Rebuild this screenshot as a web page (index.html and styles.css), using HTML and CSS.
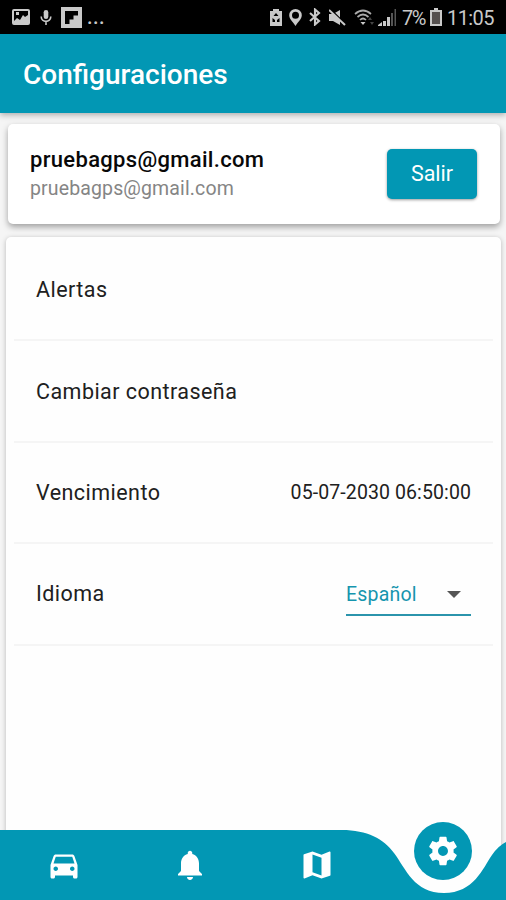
FILE: index.html
```html
<!DOCTYPE html>
<html lang="es">
<head>
<meta charset="utf-8">
<title>Configuraciones</title>
<link rel="stylesheet" href="styles.css">
</head>
<body>
<div class="app">
  <div class="status">
    <div class="status-left">
      <svg class="picture" width="18" height="16" viewBox="0 0 18 16"><path fill-rule="evenodd" d="M2 0h14a2 2 0 0 1 2 2v12a2 2 0 0 1-2 2H2a2 2 0 0 1-2-2V2a2 2 0 0 1 2-2zM2 2v10l3-3 3 2 3-5 2 2 3-2V2zM4 3h3v3H4z"/></svg>
      <svg class="mic" width="12" height="15" viewBox="0 0 12 15"><rect x="3.7" width="4.6" height="9" rx="2.3"/><path d="M1.2 6.500C1.200 13 10.800 13 10.800 6.500M6 11v4" fill="none" stroke="#c9c9c9" stroke-width="1.6"/></svg>
      <svg class="board" width="21" height="21" viewBox="0 0 21 21"><path fill-rule="evenodd" d="M0 0h21v21H0zM4 4v13h4.500v-4.500h4V8.500H17V4z"/></svg>
      <span class="more">...</span>
    </div>
    <div class="status-right">
      <svg width="12" height="17" viewBox="0 0 12 17"><path fill-rule="evenodd" d="M3 0h6v2h3v15H0V2h3zM6 4 3.500 7h5zM2.500 9v4H5v-2zm7 0L7 11v2h2.500z"/></svg>
      <svg class="pin" width="13" height="17" viewBox="0 0 13 17"><path fill-rule="evenodd" d="M6.500 0A6.300 6.300 0 0 0 .2 6.300C.2 10 4 13 6.500 17 9 13 12.800 10 12.800 6.300A6.300 6.300 0 0 0 6.500 0zm0 2.800a3.500 3.500 0 1 1 0 7 3.500 3.500 0 0 1 0-7z"/></svg>
      <svg class="bluetooth" width="12" height="18" viewBox="0 0 12 18"><path d="m1 5 9 8-4 3.500v-15L10 5l-9 8" fill="none" stroke="#c9c9c9" stroke-width="2.100"/></svg>
      <svg class="mute" width="17" height="17" viewBox="0 0 17 17"><path d="M0 5h4l7-4v15l-7-4H0z"/><path d="m1 0 16 16" stroke="#000" stroke-width="2"/><path d="m0 1 16 15" stroke="#c9c9c9" stroke-width="2"/></svg>
      <svg class="wifi" width="21" height="17" viewBox="0 0 21 17"><path d="M1 5Q9-2 17 5M3.500 8Q9 3 14.500 8M6 11q3-3 6 0" fill="none" stroke="#aaa" stroke-width="1.700"/><path d="m9 16-2.500-3h5z"/><path d="m16 8-2 3h4zm2 8-2-3h4z" fill="#444"/></svg>
      <svg class="signal" width="18" height="17" viewBox="0 0 18 17"><path d="M0 17v-1l4-3v4zm5-5h3v5H5zm4-4h3v9H9z"/><path d="M13 4h2v13h-2zM16.500 0H18v17h-1.500z" fill="#555"/></svg>
      <span class="percent">7%</span>
      <svg class="battery" width="12" height="18" viewBox="0 0 12 18"><path d="M4 0h4v2h4v16H0V2h4z"/><path d="M2 4h8v12H2z" fill="#55504f"/></svg>
      <span class="clock">11:05</span>
    </div>
  </div>
  <header class="bar"><h1>Configuraciones</h1></header>
  <main>
    <section class="account">
      <div><div class="name">pruebagps@gmail.com</div><div class="mail">pruebagps@gmail.com</div></div>
      <button class="logout">Salir</button>
    </section>
    <section class="settings">
      <div class="row"><span>Alertas</span></div>
      <div class="row"><span>Cambiar contraseña</span></div>
      <div class="row"><span>Vencimiento</span><span class="date">05-07-2030 06:50:00</span></div>
      <div class="row"><span>Idioma</span><div class="select"><span>Español</span><svg width="14" height="7" viewBox="0 0 14 7"><path d="M0 0h14L7 7z" fill="#555"/></svg></div></div>
    </section>
  </main>
  <nav>
    <svg class="wave" width="506" height="70" viewBox="0 0 506 70"><path d="M0 0H342C367 0 384 9 394 23C406 39 414 63 444 63C474 63 483 38 492 25Q498 16 506 12V70H0z" fill="#0297b4"/></svg>
    <div class="tabs">
      <svg width="36" height="36" viewBox="0 0 24 24"><path d="M18.920 6.010C18.720 5.420 18.160 5 17.500 5h-11c-.66 0-1.210.42-1.420 1.010L3 12v8c0 .55.45 1 1 1h1c.55 0 1-.45 1-1v-1h12v1c0 .55.45 1 1 1h1c.55 0 1-.45 1-1v-8l-2.080-5.990zM6.500 16c-.83 0-1.500-.67-1.500-1.500S5.670 13 6.500 13s1.500.67 1.500 1.500S7.330 16 6.500 16zm11 0c-.83 0-1.500-.67-1.500-1.500s.67-1.500 1.500-1.500 1.500.67 1.500 1.500-.67 1.500-1.500 1.500zM5 11l1.500-4.500h11L19 11H5z"/></svg>
      <svg width="36" height="36" viewBox="0 0 24 24"><path d="M12 22c1.100 0 2-.9 2-2h-4c0 1.100.89 2 2 2zm6-6v-5c0-3.070-1.640-5.640-4.500-6.320V4c0-.83-.67-1.500-1.500-1.500s-1.500.67-1.500 1.500v.68C7.630 5.360 6 7.920 6 11v5l-2 2v1h16v-1l-2-2z"/></svg>
      <svg width="36" height="36" viewBox="0 0 24 24"><path d="M20.500 3l-.16.030L15 5.100 9 3 3.360 4.900c-.21.070-.36.250-.36.480V20.500c0 .28.220.5.500.5l.16-.03L9 18.900l6 2.100 5.640-1.900c.21-.07.36-.25.36-.48V3.500c0-.28-.22-.5-.5-.5zM15 19l-6-2.110V5l6 2.110V19z"/></svg>
      <span class="active"><svg width="34" height="34" viewBox="0 0 24 24"><path d="M19.430 12.980c.04-.32.070-.64.070-.98s-.03-.66-.07-.98l2.110-1.650c.19-.15.240-.42.120-.64l-2-3.460c-.12-.22-.39-.3-.61-.22l-2.490 1c-.52-.4-1.080-.73-1.690-.98l-.38-2.650C14.460 2.180 14.250 2 14 2h-4c-.25 0-.46.18-.49.42l-.38 2.650c-.61.25-1.170.59-1.690.98l-2.490-1c-.23-.09-.49 0-.61.220l-2 3.460c-.13.220-.07.490.120.640l2.110 1.650c-.04.320-.07.650-.07.980s.03.660.07.980l-2.110 1.650c-.19.150-.24.420-.12.640l2 3.460c.12.220.39.300.61.220l2.490-1c.52.400 1.080.73 1.690.98l.38 2.650c.03.240.24.420.49.420h4c.25 0 .46-.18.490-.42l.38-2.650c.61-.25 1.170-.59 1.690-.98l2.490 1c.23.090.49 0 .61-.22l2-3.460c.12-.22.070-.49-.12-.64l-2.110-1.650zM12 15.500c-1.930 0-3.500-1.570-3.500-3.500s1.570-3.500 3.500-3.500 3.500 1.570 3.500 3.500-1.570 3.500-3.500 3.500z"/></svg></span>
    </div>
  </nav>
</div>
</body>
</html>
```

FILE: styles.css
```css
* { box-sizing: border-box; }
body { margin: 0; font-family: Roboto, sans-serif; color: #202020; }
.app { width: 506px; height: 900px; display: flex; flex-direction: column; position: relative; overflow: hidden; background: #f5f5f5; }
svg { display: block; flex: none; }
span, .name, .mail { white-space: nowrap; }
.status { height: 34px; flex: none; background: #000; color: #c9c9c9; fill: #c9c9c9; display: flex; justify-content: space-between; padding: 0 12px; }
.status-left, .status-right { display: flex; align-items: center; }
.mic { margin-left: 10px; }
.board { margin-left: 9px; }
.more { margin-left: 5px; font-size: 20px; font-weight: 500; letter-spacing: .4px; }
.pin { margin-left: 7px; }
.bluetooth { margin-left: 7px; }
.mute { margin-left: 8px; }
.wifi { margin-left: 8px; }
.signal { margin-left: 3px; }
.percent { width: 23px; margin-left: 6px; padding-top: 2px; font-size: 20px; letter-spacing: -1.5px; }
.battery { margin-left: 5px; }
.clock { width: 47px; margin-left: 5px; margin-right: 0; padding-top: 2px; font-size: 20px; letter-spacing: -.6px; }
.bar { height: 79px; flex: none; background: #0297b4; color: #fff; padding: 0 23px; display: flex; align-items: center; position: relative; box-shadow: 0 2px 6px rgba(0,0,0,.3); }
h1 { margin: 0; padding-top: 3px; font-size: 28px; line-height: 32px; font-weight: 500; }
main { flex: 1; display: flex; flex-direction: column; padding: 11px 5px 0 6px; min-height: 0; }
.account { height: 100px; flex: none; margin: 0 1px 0 2px; padding: 0 23px 1px 22px; border-radius: 5px; background: #fff; box-shadow: 0 3px 6px rgba(0,0,0,.35); display: flex; align-items: center; justify-content: space-between; }
.name { padding-top: 2px; color: #080808; font-size: 22px; line-height: 28px; font-weight: 500; letter-spacing: .32px; }
.mail { color: #858585; font-size: 19.5px; line-height: 29px; letter-spacing: .13px; }
.logout { width: 90px; height: 50px; border: 0; border-radius: 5px; background: #0297b4; color: #fff; font: 21.5px Roboto, sans-serif; box-shadow: 0 1px 3px rgba(0,0,0,.4); }
.settings { flex: 1; margin-top: 13px; padding: 3px 8px 0; border-radius: 5px 5px 0 0; background: #fefefe; box-shadow: 0 1px 5px rgba(0,0,0,.25); }
.row { height: 101.400px; padding: 0 22px; border-bottom: 2px solid #f5f5f5; display: flex; align-items: center; justify-content: space-between; font-size: 21.5px; letter-spacing: .45px; }
.date { font-size: 19.5px; letter-spacing: .1px; }
.select { width: 125px; height: 45px; padding-top: 3px; border-bottom: 2px solid #2b94ac; color: #1595ae; display: flex; align-items: center; justify-content: space-between; padding-right: 10px; font-size: 19.500px; letter-spacing: .2px; }
nav { position: absolute; left: 0; bottom: 0; width: 506px; height: 70px; fill: #fff; }
.wave { position: absolute; left: 0; top: 0; }
.tabs { position: relative; height: 70px; padding-left: 1px; display: grid; grid-template-columns: repeat(4, 1fr); justify-items: center; align-items: center; }
.active { width: 58px; height: 58px; border-radius: 50%; background: #0297b4; display: flex; align-items: center; justify-content: center; position: relative; top: -14px; }
```
